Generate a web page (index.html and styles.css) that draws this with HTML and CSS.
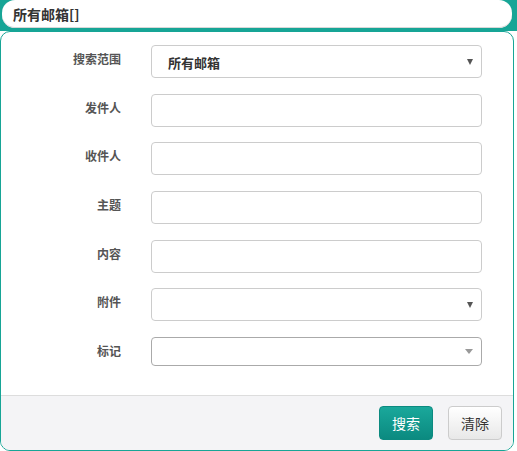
FILE: index.html
```html
<!DOCTYPE html>
<html>
<head>
<meta charset="utf-8">
<link rel="stylesheet" href="styles.css">
</head>
<body>
<div class="top">
  <div class="titlebar">所有邮箱[]</div>
</div>
<div class="panel">
  <div class="form">
    <div class="row">
      <div class="label">搜索范围</div>
      <div class="field select">所有邮箱<span class="arrow"></span></div>
    </div>
    <div class="row">
      <div class="label">发件人</div>
      <div class="field"></div>
    </div>
    <div class="row">
      <div class="label">收件人</div>
      <div class="field"></div>
    </div>
    <div class="row">
      <div class="label">主题</div>
      <div class="field"></div>
    </div>
    <div class="row">
      <div class="label">内容</div>
      <div class="field"></div>
    </div>
    <div class="row">
      <div class="label">附件</div>
      <div class="field select"><span class="arrow"></span></div>
    </div>
    <div class="row">
      <div class="label">标记</div>
      <div class="field select small"><span class="arrow light"></span></div>
    </div>
  </div>
  <div class="footer">
    <button class="btn primary">搜索</button>
    <button class="btn">清除</button>
  </div>
</div>
</body>
</html>
```

FILE: styles.css
```css
html, body {
  margin: 0;
  padding: 0;
  background: #fff;
  font-family: "Noto Sans CJK SC", "Noto Sans", sans-serif;
  color: #333;
}
.top {
  background: #17a596;
  padding: 0 5px 3px 2px;
}
.titlebar {
  height: 28px;
  background: #fff;
  border-radius: 13px;
  box-shadow: inset 0 -1px 0 #d8d8d8;
  font-size: 14px;
  font-weight: bold;
  line-height: 28px;
  padding-left: 11px;
  color: #333;
}
.panel {
  margin-right: 3px;
  height: 418px;
  border: 1px solid #17a596;
  border-radius: 10px;
  display: flex;
  flex-direction: column;
  overflow: hidden;
  background: #fff;
}
.form {
  flex: 1;
  padding-top: 13px;
  display: flex;
  flex-direction: column;
  gap: 15.67px;
}
.row {
  display: flex;
  align-items: flex-start;
}
.label {
  width: 120px;
  text-align: right;
  font-size: 12px;
  font-weight: bold;
  color: #555;
  padding-top: 5px;
  line-height: 17px;
  margin-right: 30px;
}
.field {
  width: 329px;
  height: 31px;
  border: 1px solid #ccc;
  border-radius: 4px;
  background: #fff;
  box-sizing: content-box;
  position: relative;
  font-size: 13px;
  font-weight: bold;
  line-height: 33px;
}
.select {
  text-indent: 16px;
}
.small {
  height: 27px;
  border-color: #aaa;
}
.arrow {
  position: absolute;
  right: 8px;
  top: 13px;
  width: 0;
  height: 0;
  border-left: 3px solid transparent;
  border-right: 3px solid transparent;
  border-top: 6px solid #555;
}
.small .arrow {
  top: 11px;
}
.arrow.light {
  border-top-color: #999;
  border-left-width: 4px;
  border-right-width: 4px;
  border-top-width: 5px;
}
.footer {
  height: 54px;
  background: #f4f4f6;
  border-top: 1px solid #ddd;
  display: flex;
  justify-content: flex-end;
  align-items: center;
  gap: 15px;
  padding-right: 11px;
}
.btn {
  width: 54px;
  height: 34px;
  border-radius: 4px;
  border: 1px solid #ccc;
  background: linear-gradient(#fff, #e8e8e8);
  font-family: "Noto Sans CJK SC", sans-serif;
  font-size: 14px;
  color: #333;
  padding: 0;
}
.btn.primary {
  background: linear-gradient(#1aa89b, #0b8a80);
  border-color: #0c8a80;
  color: #fff;
}
```
